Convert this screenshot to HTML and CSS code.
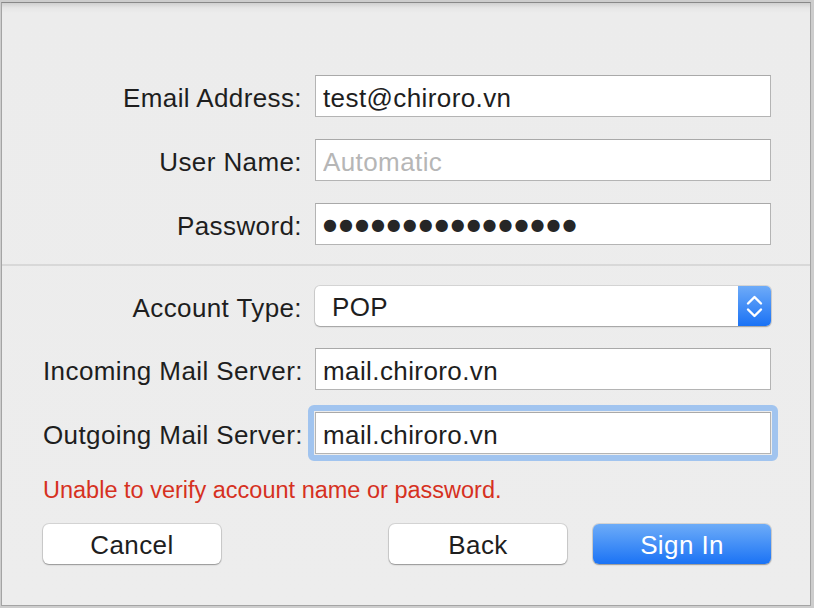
FILE: index.html
```html
<!DOCTYPE html>
<html>

<head>
    <meta name="viewport" content="width=device-width, initial-scale=1.0">
    <title>Account Setup</title>
    <link rel="stylesheet" href="styles.css">
</head>

<body>
    <div class="window">

        <div class="section section-top">
            <div class="row">
                <label class="label" for="email">Email Address:</label>
                <input class="field" type="text" id="email" value="test@chiroro.vn">
            </div>
            <div class="row">
                <label class="label" for="userName">User Name:</label>
                <input class="field" type="text" id="userName" placeholder="Automatic">
            </div>
            <div class="row">
                <label class="label">Password:</label>
                <div class="field dots">●●●●●●●●●●●●●●●●</div>
            </div>
        </div>

        <div class="separator"></div>

        <div class="section">
            <div class="row row-popup">
                <label class="label">Account Type:</label>
                <div class="popup">
                    <span class="popup-value">POP</span>
                    <span class="stepper">
                        <svg width="33" height="40" viewBox="0 0 33 40">
                            <path d="M10 17.5 L16.5 11 L23 17.5" fill="none" stroke="#fff" stroke-width="2.4" stroke-linecap="round" stroke-linejoin="round" />
                            <path d="M10 23.5 L16.5 30 L23 23.5" fill="none" stroke="#fff" stroke-width="2.4" stroke-linecap="round" stroke-linejoin="round" />
                        </svg>
                    </span>
                </div>
            </div>
            <div class="row">
                <label class="label" for="incoming">Incoming Mail Server:</label>
                <input class="field" type="text" id="incoming" value="mail.chiroro.vn">
            </div>
            <div class="row">
                <label class="label" for="outgoing">Outgoing Mail Server:</label>
                <div class="focus-wrap">
                    <input class="field" type="text" id="outgoing" value="mail.chiroro.vn">
                </div>
            </div>

            <p class="error">Unable to verify account name or password.</p>

            <div class="buttons">
                <button type="button" class="btn">Cancel</button>
                <button type="button" class="btn btn-back">Back</button>
                <button type="button" class="btn btn-primary">Sign In</button>
            </div>
        </div>

    </div>
</body>

</html>
```

FILE: styles.css
```css
* {
    box-sizing: border-box;
    font-family: "Liberation Sans", Arial, sans-serif;
}

html,
body {
    margin: 0;
    height: 608px;
    overflow: hidden;
    background-color: #cdcdcd;
}

.window {
    margin: 2px 3px 2px 1px;
    height: 604px;
    border: 1px solid #a4a4a4;
    border-top-color: #888;
    background: linear-gradient(#d0d0d0, #e6e6e6 5px, #ececec 10px, #ededed);
}

.section {
    padding: 0 39px 0 41px;
}

.section-top {
    padding-top: 72px;
}

.row {
    display: grid;
    grid-template-columns: 259px 456px;
    column-gap: 13px;
    align-items: center;
    margin-bottom: 22px;
}

.section-top .row:last-child {
    margin-bottom: 0;
}

.label {
    padding-top: 5px;
    text-align: right;
    font-size: 26px;
    letter-spacing: 0.4px;
    color: #1e1e1e;
    white-space: nowrap;
}

.field {
    display: block;
    width: 456px;
    height: 42px;
    margin: 0;
    padding: 5px 7px 0;
    border: 1px solid #b4b4b4;
    border-top-color: #a9a9a9;
    background-color: #fff;
    font-size: 26px;
    letter-spacing: 0.4px;
    color: #1e1e1e;
    outline: none;
}

.field::placeholder {
    color: #b6b6b6;
}

.dots {
    padding-top: 1px;
    font-family: "DejaVu Sans", sans-serif;
    font-size: 16px;
    line-height: 40px;
    letter-spacing: 2px;
    color: #262626;
}

.separator {
    height: 2px;
    margin: 19px 0 20px;
    background-color: #d8d8d8;
}

.popup {
    display: flex;
    align-items: center;
    height: 40px;
    border-radius: 5px;
    background-color: #fff;
    box-shadow: 0 0 0 1px rgba(0, 0, 0, 0.1), 0 1px 1.5px rgba(0, 0, 0, 0.25);
    overflow: hidden;
}

.popup-value {
    flex: 1;
    padding: 3px 0 0 17px;
    font-size: 26px;
    letter-spacing: 0.4px;
    color: #1e1e1e;
}

.stepper {
    display: block;
    width: 33px;
    height: 40px;
    background: linear-gradient(#6eabf8, #1a72f5);
}

.stepper svg {
    display: block;
}

.focus-wrap {
    position: relative;
}

.focus-wrap::before {
    content: '';
    position: absolute;
    inset: -7px;
    border: 6.5px solid #a1c4ef;
    border-radius: 6px;
    pointer-events: none;
}

.error {
    margin: 1px 0 20px;
    font-size: 23.5px;
    line-height: 28px;
    color: #d6311f;
}

.buttons {
    display: flex;
    gap: 26px;
}

.btn {
    width: 178px;
    height: 40px;
    padding: 2px 0 0;
    border: none;
    border-radius: 6px;
    background-color: #fff;
    box-shadow: 0 0 0 1px rgba(0, 0, 0, 0.1), 0 1px 1.5px rgba(0, 0, 0, 0.3);
    font-size: 26px;
    letter-spacing: 0.4px;
    color: #1e1e1e;
}

.btn-back {
    margin-left: auto;
}

.btn-primary {
    background: linear-gradient(#6dacf8, #1b73f5);
    color: #fff;
}
```
